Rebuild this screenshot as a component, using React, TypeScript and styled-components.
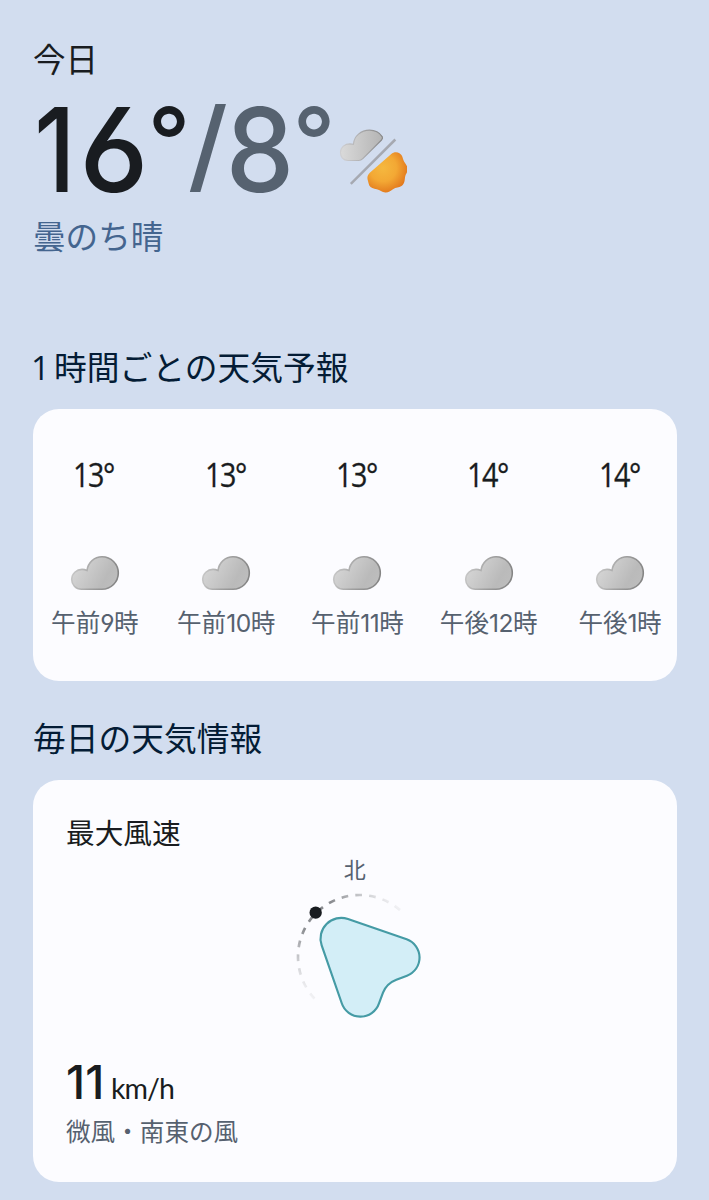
import React from "react";
import styled, { createGlobalStyle } from "styled-components";

const GlobalStyle = createGlobalStyle`
  * { box-sizing: border-box; }
  body {
    margin: 0;
    background: #d2ddef;
    font-family: "Noto Sans CJK JP", sans-serif;
    color: #191c20;
  }
  h1, h2, h3, p, ul { margin: 0; padding: 0; font-weight: 400; list-style: none; }
`;

const Page = styled.main`
  width: 709px;
  height: 1200px;
  padding: 38px 32px 0 33px;
  overflow: hidden;
`;

const Today = styled.h1`
  height: 42px;
  font-size: 32.5px;
  line-height: 40px;
`;

const TempRow = styled.div`
  display: flex;
  height: 132px;
  font-family: Inter, "Noto Sans CJK JP", sans-serif;
  font-feature-settings: "cv03", "cv04";
`;

const Glyph = styled.span<{
  $w: number;
  $size?: number;
  $weight?: number;
  $scale?: number;
  $low?: boolean;
  $x?: number;
  $y?: number;
}>`
  display: flex;
  justify-content: center;
  flex: none;
  width: ${(p) => p.$w}px;
  height: 138px;
  font-size: ${(p) => p.$size ?? 117}px;
  font-weight: ${(p) => p.$weight ?? 450};
  line-height: 138px;
  color: ${(p) => (p.$low ? "#566270" : "#191c20")};
  transform: translate(${(p) => p.$x ?? 0}px, ${(p) => p.$y ?? 0.5}px) scaleX(${(p) => p.$scale ?? 1});
`;

const ConditionIcon = styled.svg`
  flex: none;
  width: 72px;
  height: 68px;
  margin: 45.5px 0 0 0;
`;

const Summary = styled.p`
  height: 50px;
  font-size: 32.6px;
  line-height: 46px;
  color: #44658f;
`;

const SectionTitle = styled.h2<{ $top: number }>`
  height: 48px;
  margin-top: ${(p) => p.$top}px;
  font-size: 32.75px;
  line-height: 48px;
  color: #041c35;
  white-space: pre;
`;

const TitleNumber = styled.span`
  display: inline-block;
  width: 21px;
  font-family: "Open Sans", sans-serif;
  text-indent: -2px;
`;

const Card = styled.section<{ $h: number; $top: number }>`
  width: 643.5px;
  height: ${(p) => p.$h}px;
  margin-top: ${(p) => p.$top}px;
  border-radius: 26px;
  background: #fcfcff;
  overflow: hidden;
`;

const Hours = styled.ul`
  display: flex;
  margin-left: -3.8px;
  padding-top: 44px;
`;

const Hour = styled.li`
  flex: 0 0 131.3px;
  display: flex;
  flex-direction: column;
  align-items: center;
`;

const HourTemp = styled.span`
  height: 44px;
  font-family: "Open Sans", sans-serif;
  font-size: 33px;
  line-height: 44px;
  letter-spacing: -1.6px;
  transform: translateX(-1px) scaleX(0.87);
  -webkit-text-stroke: 0.3px currentColor;
`;

const CloudSvg = styled.svg`
  width: 50px;
  height: 36px;
  margin-top: 58px;
`;

const HourLabel = styled.span`
  height: 36px;
  margin-top: 13px;
  font-size: 24.6px;
  line-height: 35px;
  color: #56616f;
  white-space: nowrap;
`;

const HourNumber = styled.span`
  font-family: Inter, sans-serif;
  font-feature-settings: "cv03", "cv04";
  letter-spacing: -0.5px;
`;

const WindCard = styled(Card)`
  display: flex;
  flex-direction: column;
  padding: 32px 33px 0;
`;

const CardTitle = styled.h3`
  height: 40px;
  font-size: 28.7px;
  line-height: 40px;
`;

const Compass = styled.div`
  display: flex;
  flex-direction: column;
  align-items: center;
  height: 202px;
`;

const North = styled.span`
  height: 34px;
  font-size: 22px;
  line-height: 32px;
  color: #56616f;
`;

const CompassSvg = styled.svg`
  width: 160px;
  height: 144px;
  margin-left: 10.5px;
`;

const Speed = styled.div`
  display: flex;
  align-items: baseline;
  height: 58px;
  line-height: 56px;
`;

const SpeedValue = styled.span`
  width: 45px;
  font-family: Inter, sans-serif;
  font-size: 46px;
  font-weight: 450;
  letter-spacing: 0.2px;
`;

const SpeedUnit = styled.span`
  font-family: Lato, sans-serif;
  font-size: 28.5px;
  letter-spacing: -0.9px;
`;

const WindText = styled.p`
  height: 36px;
  font-size: 24.6px;
  line-height: 36px;
  color: #56616f;
`;

const CloudIcon = ({ id }: { id: string }) => (
  <CloudSvg viewBox="0 0 50 36">
    <defs>
      <linearGradient id={id} x1="0" y1="0.3" x2="1" y2="0.7">
        <stop offset="0" stopColor="#d8d8d8" />
        <stop offset="0.45" stopColor="#c6c6c6" />
        <stop offset="0.75" stopColor="#bababa" />
        <stop offset="1" stopColor="#bdbdbd" />
      </linearGradient>
      <linearGradient id={`${id}e`} x1="0" y1="0.3" x2="1" y2="0.5">
        <stop offset="0" stopColor="#cccccc" />
        <stop offset="0.5" stopColor="#a0a0a0" />
        <stop offset="1" stopColor="#858585" />
      </linearGradient>
    </defs>
    <path
      d="M11.5 34.2C5.5 34.2 1.7 29.6 1.7 24.6C1.7 18.6 6.6 14.4 12 14.4C14 14.4 15.8 14.9 17 15.4C18 7.4 24.4 1.7 32 1.7C41 1.7 48.3 9 48.3 18C48.3 27 41 34.2 32 34.2Z"
      fill={`url(#${id})`}
      stroke={`url(#${id}e)`}
      strokeWidth="1.6"
    />
  </CloudSvg>
);

const hours = [
  { temp: "13°", prefix: "午前", hour: "9" },
  { temp: "13°", prefix: "午前", hour: "10" },
  { temp: "13°", prefix: "午前", hour: "11" },
  { temp: "14°", prefix: "午後", hour: "12" },
  { temp: "14°", prefix: "午後", hour: "1" },
];

export default function App() {
  return (
    <>
      <GlobalStyle />
      <Page>
        <Today>今日</Today>
        <TempRow>
          <Glyph $w={44} $scale={0.85}>1</Glyph>
          <Glyph $w={74}>6</Glyph>
          <Glyph $w={36} $size={93} $weight={500} $y={-9}>°</Glyph>
          <Glyph $w={40} $low $size={101} $y={-5} $x={1} $scale={1.08}>/</Glyph>
          <Glyph $w={66} $low $scale={0.93}>8</Glyph>
          <Glyph $w={42} $low $size={93} $weight={500} $y={-9}>°</Glyph>
          <ConditionIcon viewBox="0 0 72 68">
            <defs>
              <linearGradient id="half-cloud" x1="0" y1="0.5" x2="1" y2="0.5">
                <stop offset="0" stopColor="#dadada" />
                <stop offset="1" stopColor="#b4b4b4" />
              </linearGradient>
              <linearGradient id="half-cloud-edge" x1="0" y1="0.5" x2="1" y2="0.4">
                <stop offset="0" stopColor="#cfcfd2" />
                <stop offset="1" stopColor="#888888" />
              </linearGradient>
              <radialGradient id="half-sun" gradientUnits="userSpaceOnUse" cx="48" cy="42" r="27">
                <stop offset="0" stopColor="#f5b83f" />
                <stop offset="0.5" stopColor="#f3a834" />
                <stop offset="1" stopColor="#e0731a" />
              </radialGradient>
            </defs>
            <path
              d="M13 34.5C8 34.5 5.5 31 5.5 26.5C5.5 21 10 17.8 15 17.8L18.4 18.3C19 10 26 4.2 34.5 4.2C40 4.2 44.5 6.6 47.3 10.8Q47.9 12.5 46.5 14L27.8 32.7Q26 34.5 23.5 34.5Z"
              fill="url(#half-cloud)"
              stroke="url(#half-cloud-edge)"
              strokeWidth="1.2"
            />
            <path d="M15.8 57.8L60.3 13.5" stroke="#a6a9b1" strokeWidth="2.5" />
            <path
              d="M33 55C31.8 51.5 32.4 49.2 34.8 46.8L56 28.2C59 25.8 62 25.8 64.8 27.5C67.6 29.3 67.6 32 68.6 34.6C69.8 37.8 73 39.8 72.8 43.5C72.5 46.8 70.4 48.2 70 51.5C69.6 55 69.5 58 66.5 60C63.8 61.6 61 61.2 58 63.2C55.2 65.2 53.5 66.6 50.3 66.4C47 66.2 45 64.2 41.8 63.3C38.6 62.5 35.6 61.8 34.3 59.5C33.6 58 33.5 56.5 33 55Z"
              fill="url(#half-sun)"
            />
          </ConditionIcon>
        </TempRow>
        <Summary>曇のち晴</Summary>

        <SectionTitle $top={80}>
          <TitleNumber>1</TitleNumber>時間ごとの天気予報
        </SectionTitle>
        <Card $h={272.5} $top={18.5}>
          <Hours>
            {hours.map((h) => (
              <Hour key={h.prefix + h.hour}>
                <HourTemp>{h.temp}</HourTemp>
                <CloudIcon id={`cloud${h.hour}`} />
                <HourLabel>
                  {h.prefix}
                  <HourNumber>{h.hour}</HourNumber>時
                </HourLabel>
              </Hour>
            ))}
          </Hours>
        </Card>

        <SectionTitle $top={31.5}>毎日の天気情報</SectionTitle>
        <WindCard $h={402} $top={19}>
          <CardTitle>最大風速</CardTitle>
          <Compass>
            <North>北</North>
            <CompassSvg viewBox="0 108 480 432">
              <defs>
                <linearGradient id="arc-fade" gradientUnits="userSpaceOnUse" x1="368" y1="187" x2="106" y2="449">
                  <stop offset="0" stopColor="#8a8c90" stopOpacity="0.1" />
                  <stop offset="0.35" stopColor="#8a8c90" stopOpacity="1" />
                  <stop offset="0.65" stopColor="#8a8c90" stopOpacity="1" />
                  <stop offset="1" stopColor="#8a8c90" stopOpacity="0.1" />
                </linearGradient>
              </defs>
              <path
                d="M367.8 187.2A185 185 0 0 0 106.2 448.8"
                fill="none"
                stroke="url(#arc-fade)"
                strokeWidth="8"
                strokeDasharray="20 21.5"
                strokeDashoffset="-10.75"
              />
              <circle cx="107" cy="188" r="18.5" fill="#191c20" />
              <path
                d="M204 207L380 268A58 58 0 0 1 381 377L349 389C328 397 317 407 309 428L297 460A59 59 0 0 1 185 459L125 286A62 62 0 0 1 204 207Z"
                fill="#d3eef7"
                stroke="#459ba5"
                strokeWidth="6.5"
              />
            </CompassSvg>
          </Compass>
          <Speed>
            <SpeedValue>11</SpeedValue>
            <SpeedUnit>km/h</SpeedUnit>
          </Speed>
          <WindText>微風・南東の風</WindText>
        </WindCard>
      </Page>
    </>
  );
}
